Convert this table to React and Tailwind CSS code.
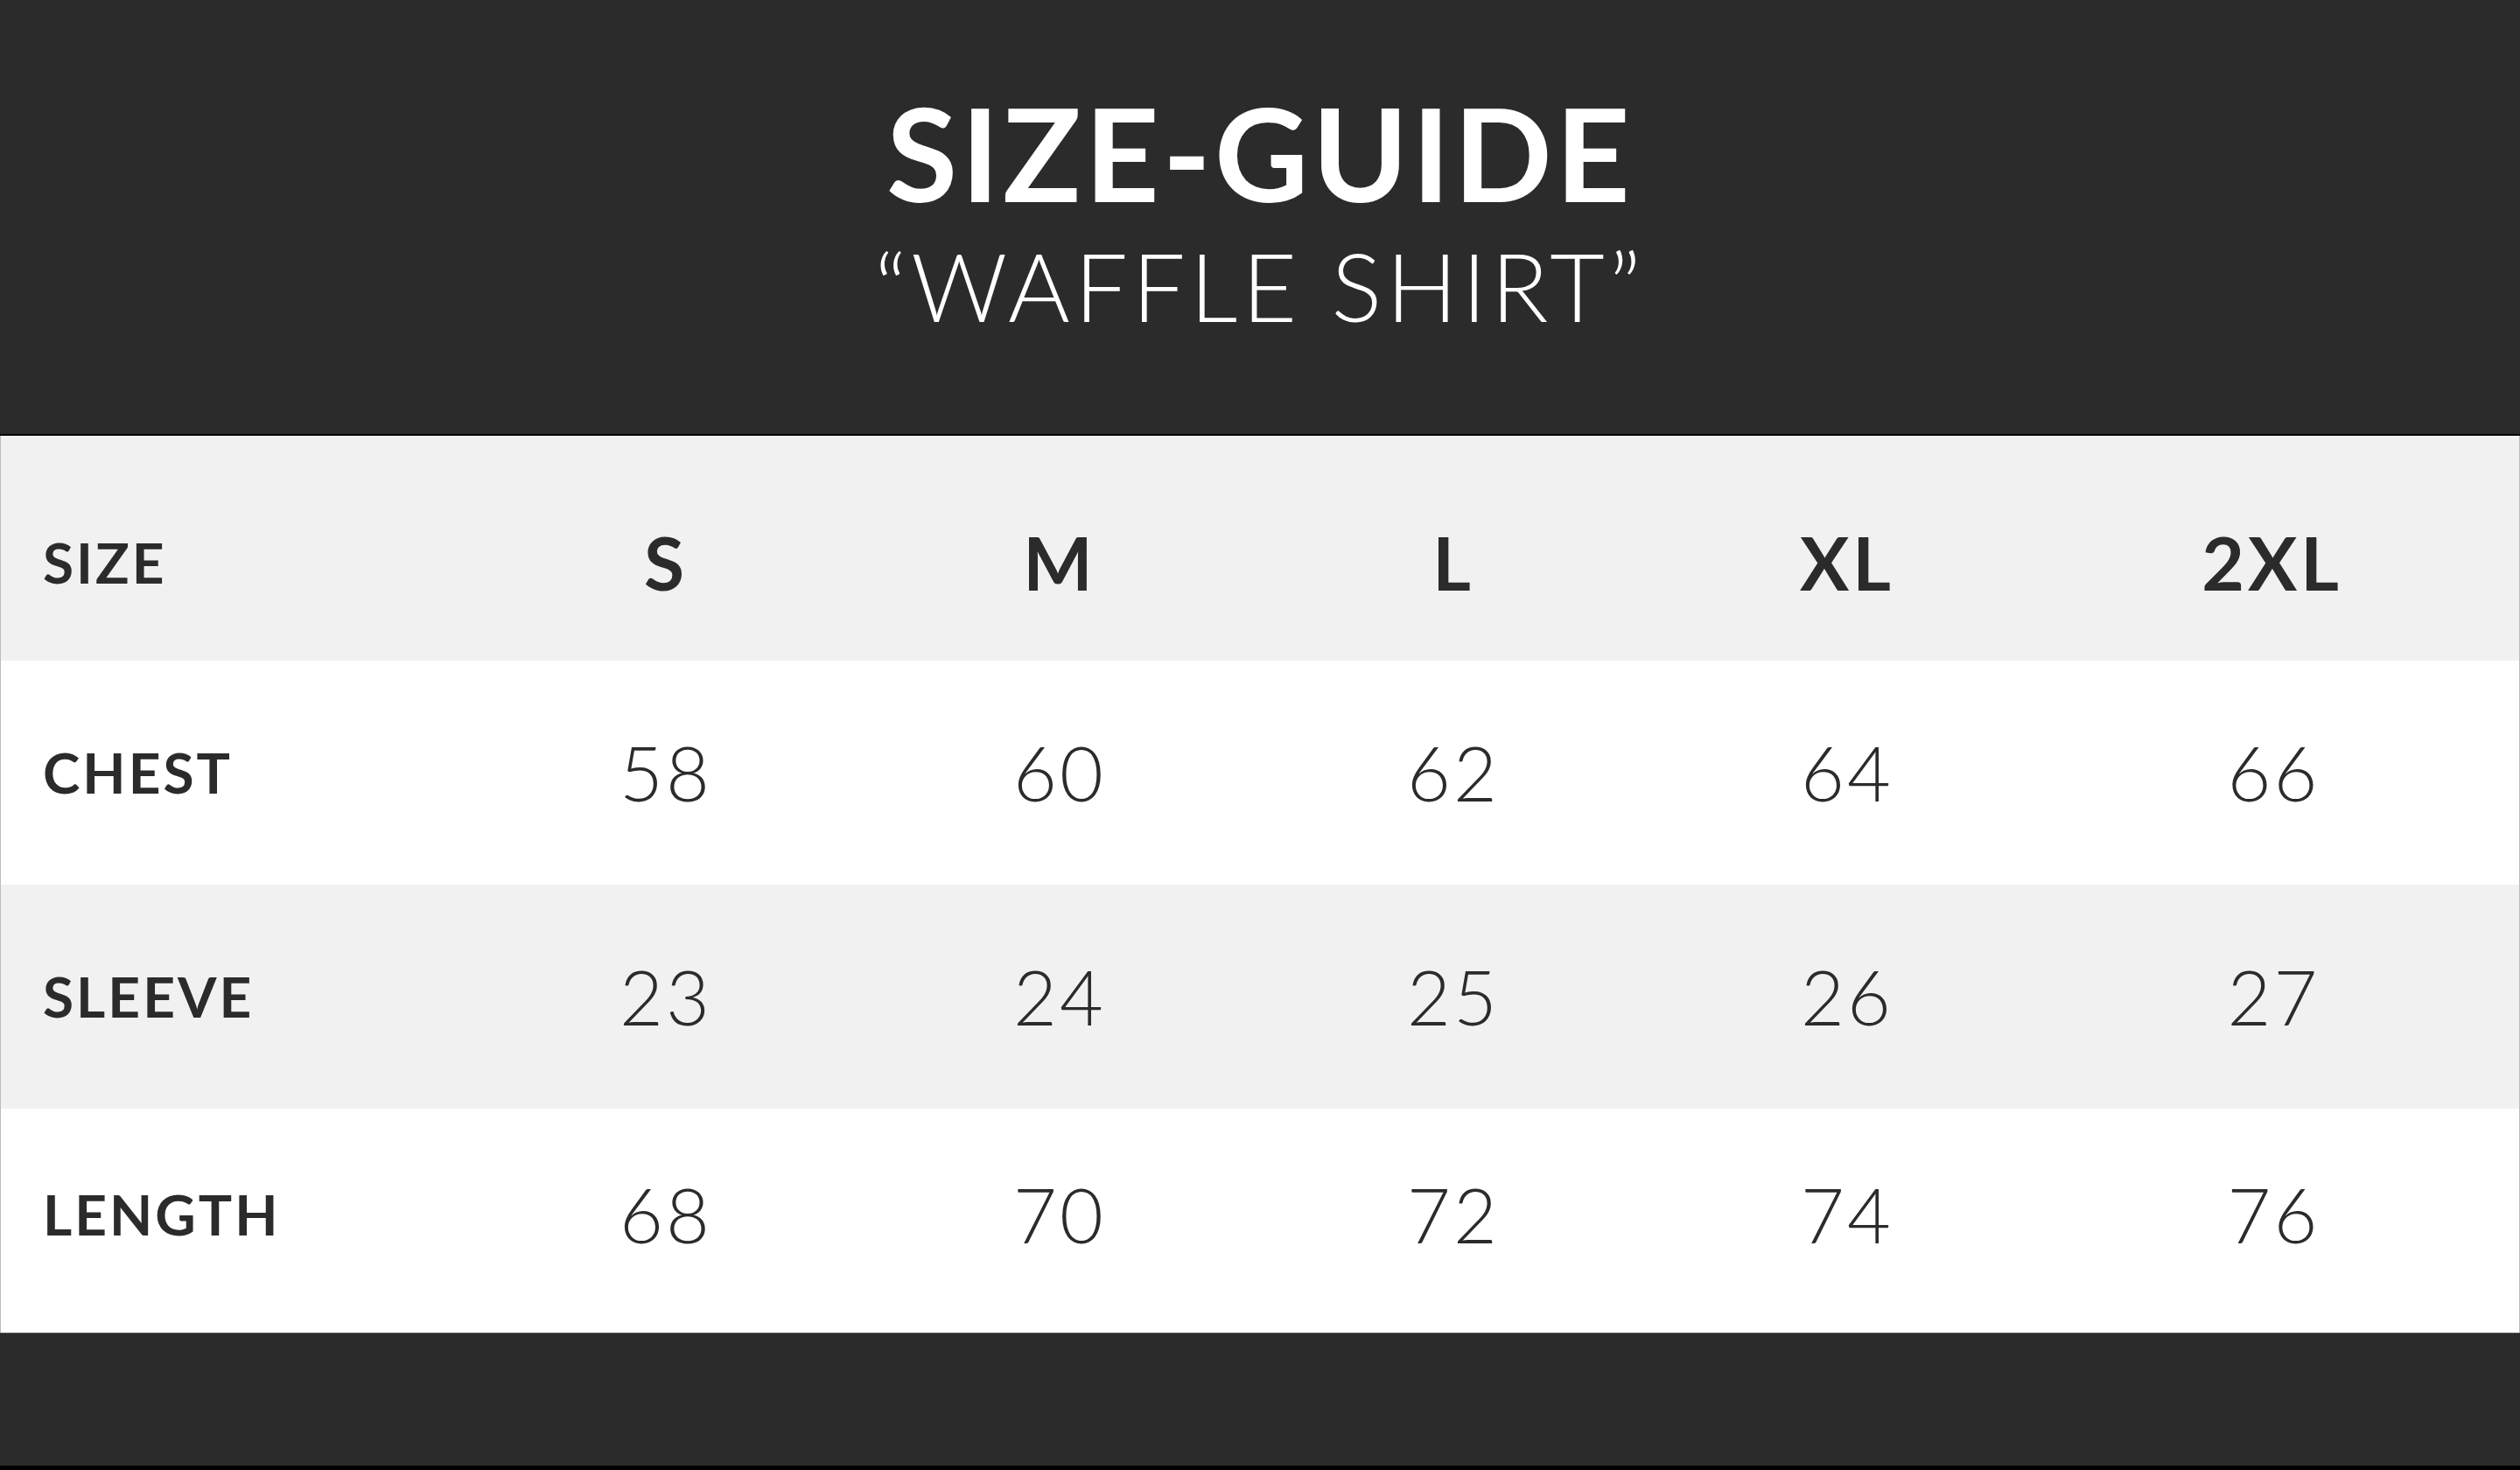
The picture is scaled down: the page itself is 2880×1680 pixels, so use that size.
const sizes = ["S", "M", "L", "XL", "2XL"];

const rows = [
  { label: "CHEST", values: [58, 60, 62, 64, 66], bg: "bg-white", pad: "" },
  { label: "SLEEVE", values: [23, 24, 25, 26, 27], bg: "bg-[#f1f1f1]", pad: "" },
  { label: "LENGTH", values: [68, 70, 72, 74, 76], bg: "bg-white", pad: "pb-[14px]" },
];

const grid = "grid grid-cols-[535px_450px_450px_450px_450px_1fr] items-center";

export default function App() {
  return (
    <div className="w-[2880px] h-[1680px] flex flex-col bg-[#2b2b2b] font-['Lato','Liberation_Sans',sans-serif] text-[#2b2b2b]">
      {/* Header */}
      <header className="h-[498px] shrink-0 box-border border-b-2 border-black flex flex-col items-center pt-[100px] text-white">
        <h1 className="text-[148px] leading-none font-bold tracking-[4px]">SIZE-GUIDE</h1>
        <p className="mt-[24px] text-[108px] leading-none font-light tracking-[5px]">
          “WAFFLE SHIRT”
        </p>
      </header>

      {/* Table */}
      <section className="border-x border-[#bdbdbd]">
        <div className={`${grid} h-[257px] bg-[#f1f1f1] pt-[32px]`}>
          <div className="pl-[48px] text-[64px] leading-none font-bold tracking-[3px]">SIZE</div>
          {sizes.map((s, i) => (
            <div
              key={s}
              className={`text-center text-[84px] leading-none font-bold tracking-[4px] ${i === 4 ? "pr-[22px]" : ""}`}
            >
              {s}
            </div>
          ))}
        </div>

        {rows.map((row) => (
          <div key={row.label} className={`${grid} h-[256px] ${row.bg} ${row.pad}`}>
            <div className="pl-[48px] text-[64px] leading-none font-bold tracking-[3px]">
              {row.label}
            </div>
            {row.values.map((v, i) => (
              <div
                key={v}
                className={`text-center text-[86px] leading-none font-light tracking-[3px] ${i === 4 ? "pr-[18px]" : ""}`}
              >
                {v}
              </div>
            ))}
          </div>
        ))}
      </section>

      {/* Footer band */}
      <footer className="flex-1 border-t border-[#555] border-b-[5px] border-b-black" />
    </div>
  );
}
